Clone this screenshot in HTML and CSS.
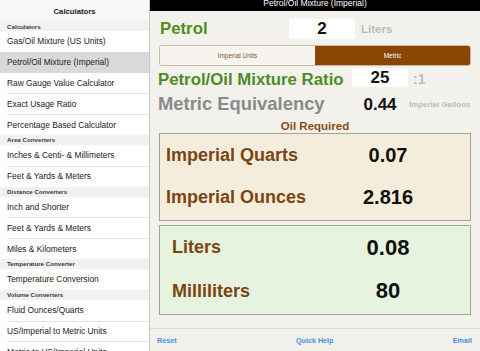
FILE: index.html
```html
<!DOCTYPE html>
<html>
<head>
    <meta charset="utf-8">
    <meta name="viewport" content="width=device-width, initial-scale=1.0">
    <title>Petrol/Oil Mixture (Imperial)</title>
    <link rel="stylesheet" href="styles.css">
</head>
<body>
    <div class="app">
        <aside class="sidebar">
            <div class="side-head">Calculators</div>
            <div class="section">Calculators</div>
            <div class="item">Gas/Oil Mixture (US Units)</div>
            <div class="item selected">Petrol/Oil Mixture (Imperial)</div>
            <div class="item">Raw Gauge Value Calculator</div>
            <div class="item">Exact Usage Ratio</div>
            <div class="item">Percentage Based Calculator</div>
            <div class="section">Area Converters</div>
            <div class="item">Inches &amp; Centi- &amp; Millimeters</div>
            <div class="item">Feet &amp; Yards &amp; Meters</div>
            <div class="section">Distance Converters</div>
            <div class="item">Inch and Shorter</div>
            <div class="item">Feet &amp; Yards &amp; Meters</div>
            <div class="item">Miles &amp; Kilometers</div>
            <div class="section">Temperature Converter</div>
            <div class="item">Temperature Conversion</div>
            <div class="section">Volume Converters</div>
            <div class="item">Fluid Ounces/Quarts</div>
            <div class="item">US/Imperial to Metric Units</div>
            <div class="item">Metric to US/Imperial Units</div>
        </aside>

        <main class="pane">
            <div class="titlebar"><span>Petrol/Oil Mixture (Imperial)</span></div>

            <div class="content">
                <div class="row-petrol">
                    <span class="big-label green petrol">Petrol</span>
                    <span class="field field-petrol">2</span>
                    <span class="unit">Liters</span>
                </div>

                <div class="segmented">
                    <div class="seg">Imperial Units</div>
                    <div class="seg active">Metric</div>
                </div>

                <div class="row-ratio">
                    <span class="big-label green ratio">Petrol/Oil Mixture Ratio</span>
                    <span class="field field-ratio">25</span>
                    <span class="unit">:1</span>
                </div>

                <div class="row-metric">
                    <span class="big-label grey">Metric Equivalency</span>
                    <span class="metric-value">0.44</span>
                    <span class="unit-small">Imperial Gallons</span>
                </div>

                <div class="oil-title">Oil Required</div>

                <div class="result imperial">
                    <span class="res-label">Imperial Quarts</span>
                    <span class="res-value">0.07</span>
                    <span class="res-label">Imperial Ounces</span>
                    <span class="res-value">2.816</span>
                </div>

                <div class="result metric">
                    <span class="res-label">Liters</span>
                    <span class="res-value">0.08</span>
                    <span class="res-label">Milliliters</span>
                    <span class="res-value">80</span>
                </div>
            </div>

            <footer class="toolbar">
                <a class="tool">Reset</a>
                <a class="tool">Quick Help</a>
                <a class="tool">Email</a>
            </footer>
        </main>
    </div>
</body>
</html>
```

FILE: styles.css
```css
html, body {
    font-family: "Liberation Sans", Arial, sans-serif;
    font-size: 16px;
}
body {
    margin: 0;
    padding: 0;
    overflow: hidden;
}

.app {
    display: flex;
    width: 480px;
    height: 351px;
}

/* left list */
.sidebar {
    width: 150px;
    flex: none;
    box-sizing: border-box;
    border-right: 1px solid #c9c9c9;
    background: #fff;
    overflow: hidden;
}
.side-head {
    height: 22px;
    display: flex;
    align-items: center;
    justify-content: center;
    background: #f7f7f7;
    font-size: 7.7px;
    font-weight: bold;
    color: #222;
}
.section {
    height: 10px;
    display: flex;
    align-items: center;
    padding-left: 7px;
    background: #f1f1f1;
    font-size: 6.2px;
    font-weight: bold;
    color: #3a3a3a;
}
.side-head + .section {
    height: 9px;
}
.item {
    height: 20.8px;
    display: flex;
    align-items: center;
    padding-left: 7px;
    font-size: 8.4px;
    color: #222;
    white-space: nowrap;
}
.item + .item {
    background-image: linear-gradient(#e3e3e3, #e3e3e3);
    background-size: calc(100% - 7px) 1px;
    background-position: right top;
    background-repeat: no-repeat;
}
.item.selected {
    background: #d9d9d9;
}
.item.selected + .item {
    background-image: none;
}

/* right pane */
.pane {
    flex: 1;
    display: flex;
    flex-direction: column;
    background: #f3f1ec;
}
.titlebar {
    height: 11px;
    flex: none;
    background: #000;
    color: #fff;
    font-size: 8.5px;
    line-height: 10px;
    display: flex;
    justify-content: center;
    align-items: flex-start;
    overflow: hidden;
}
.titlebar span {
    margin-top: -2px;
}

.content {
    padding: 0 9px;
}

.big-label {
    font-weight: bold;
    white-space: nowrap;
}
.green {
    color: #4f8c26;
}
.grey {
    color: #8a8a8a;
    font-size: 18.4px;
}

.field {
    background: #fff;
    border-radius: 2px;
    font-weight: bold;
    color: #111;
    display: flex;
    align-items: center;
    justify-content: center;
}

.row-petrol {
    display: flex;
    align-items: center;
    margin-top: 8px;
    height: 20px;
}
.petrol {
    font-size: 16.8px;
    width: 129px;
    padding-left: 1px;
}
.field-petrol {
    width: 66px;
    height: 20px;
    font-size: 17px;
}
.unit {
    color: #bcbcbc;
    font-weight: bold;
    font-size: 11.5px;
    margin-left: 6px;
}

.segmented {
    display: flex;
    margin-top: 6px;
    height: 21px;
    box-sizing: border-box;
    border: 1px solid #c8b7a2;
    border-radius: 3px;
    overflow: hidden;
}
.seg {
    flex: 1;
    display: flex;
    align-items: center;
    justify-content: center;
    font-size: 6.5px;
    color: #7d5a3a;
    background: #f7f4ef;
}
.seg.active {
    background: #8a4404;
    color: #fff;
}

.row-ratio {
    display: flex;
    align-items: center;
    margin-top: 2px;
    height: 19px;
}
.ratio {
    font-size: 16.8px;
    width: 194px;
    margin-left: -1px;
    padding-top: 4px;
}
.field-ratio {
    width: 56px;
    height: 19px;
    font-size: 17px;
}
.row-ratio .unit {
    font-size: 14px;
    margin-left: 5px;
    padding-top: 2px;
}

.row-metric {
    display: flex;
    align-items: center;
    margin-top: 5px;
    height: 24px;
}
.row-metric .big-label {
    width: 194px;
    margin-left: -1px;
}
.metric-value {
    width: 56px;
    text-align: center;
    font-weight: bold;
    font-size: 17px;
    color: #111;
    padding-top: 2px;
}
.unit-small {
    font-size: 7.9px;
    font-weight: bold;
    color: #bdbdbd;
    margin-left: 1px;
}

.oil-title {
    margin-top: 3px;
    height: 14px;
    line-height: 14px;
    text-align: center;
    font-size: 11.5px;
    font-weight: bold;
    color: #8a4b12;
}

.result {
    display: grid;
    align-items: center;
    border: 1.5px solid #a7a39b;
    box-sizing: border-box;
}
.res-label {
    font-size: 18px;
    font-weight: bold;
    color: #7a4514;
    white-space: nowrap;
}
.res-value {
    font-weight: bold;
    color: #111;
    text-align: center;
}

.imperial {
    margin-top: 0;
    height: 88px;
    background: #f5eddb;
    padding-left: 6px;
    grid-template-columns: 164px 116px;
    grid-auto-rows: 42.5px;
}
.imperial .res-value {
    font-size: 20px;
}

.metric {
    margin-top: 4px;
    height: 90px;
    background: #e6f3df;
    padding-left: 12px;
    grid-template-columns: 158px 116px;
    grid-auto-rows: 43.5px;
}
.metric .res-value {
    font-size: 22px;
}

.toolbar {
    margin-top: auto;
    height: 23px;
    box-sizing: border-box;
    border-top: 1px solid #dcdad5;
    display: flex;
    align-items: center;
    justify-content: space-between;
    padding: 0 8px 0 7px;
}
.tool {
    font-size: 7.2px;
    font-weight: bold;
    color: #4a90dc;
    cursor: pointer;
}
```
